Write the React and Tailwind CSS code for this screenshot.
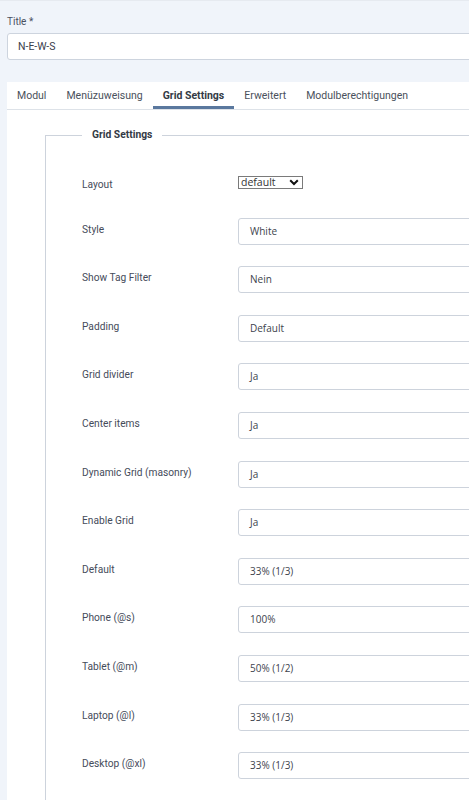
import React from "react";

const rows = [
  ["Style", "White"],
  ["Show Tag Filter", "Nein"],
  ["Padding", "Default"],
  ["Grid divider", "Ja"],
  ["Center items", "Ja"],
  ["Dynamic Grid (masonry)", "Ja"],
  ["Enable Grid", "Ja"],
  ["Default", "33% (1/3)"],
  ["Phone (@s)", "100%"],
  ["Tablet (@m)", "50% (1/2)"],
  ["Laptop (@l)", "33% (1/3)"],
  ["Desktop (@xl)", "33% (1/3)"],
];

const tabs = ["Modul", "Menüzuweisung", "Grid Settings", "Erweitert", "Modulberechtigungen"];

export default function App() {
  return (
    <div className="w-[469px] h-[800px] overflow-hidden bg-[#f0f4fa] font-['Roboto',sans-serif] border-t border-[#e6eaf0]">
      <div className="pl-[7px] pt-[14px]">
        <div className="text-[10px] leading-[13px] text-[#4a5060]">Title *</div>
        <div className="mt-[5px] w-[520px] h-[27px] bg-white border border-[#cdd4de] rounded-[3px] flex items-center pl-[10px] text-[10.5px] text-[#3a404c]">
          N-E-W-S
        </div>
        <div className="mt-[22px] h-[28px] bg-white border-b border-[#dde2e8] flex items-stretch w-[520px]">
          {tabs.map((t) => (
            <div
              key={t}
              className={
                t === "Grid Settings"
                  ? "px-[10px] flex items-center text-[10.5px] font-bold text-[#333a45] border-b-[3px] border-[#5a789e] pt-[3px]"
                  : "px-[10px] flex items-center text-[10.5px] text-[#4a515c]"
              }
            >
              {t}
            </div>
          ))}
        </div>
        <div className="bg-white h-[700px] pl-[38px] pt-[18px]">
          <fieldset className="border-l border-t border-[#cdd3dc] h-[680px] pl-[36px]">
            <legend className="px-[10px] text-[10.3px] leading-[14px] font-bold text-[#333a45]">
              Grid Settings
            </legend>
            <div className="mt-[27px]">
              <div className="h-[48.6px] flex items-start">
                <div className="w-[156px] pt-[9px] text-[10.2px] leading-[14px] text-[#454b5a]">Layout</div>
                <div className="mt-[7px] w-[65px] h-[13px] border border-[#7a7a7a] flex items-center justify-between pl-[2px] pr-[3px] font-['Open_Sans',sans-serif] text-[10.5px] leading-none text-[#333]">
                  <span>default</span>
                  <svg width="10" height="7" viewBox="0 0 10 7">
                    <path d="M1.2 1.2 L5 5 L8.8 1.2" fill="none" stroke="#111" strokeWidth="2" />
                  </svg>
                </div>
              </div>
              {rows.map(([label, value]) => (
                <div key={label} className="h-[48.6px] flex items-start">
                  <div className="w-[156px] pt-[5px] text-[10.2px] leading-[14px] text-[#454b5a]">{label}</div>
                  <div className="w-[260px] h-[27px] bg-white border border-[#cdd3dc] rounded-[3px] flex items-center pl-[11px] font-['Open_Sans',sans-serif] text-[10px] text-[#3d434d]">
                    {value}
                  </div>
                </div>
              ))}
            </div>
          </fieldset>
        </div>
      </div>
    </div>
  );
}
